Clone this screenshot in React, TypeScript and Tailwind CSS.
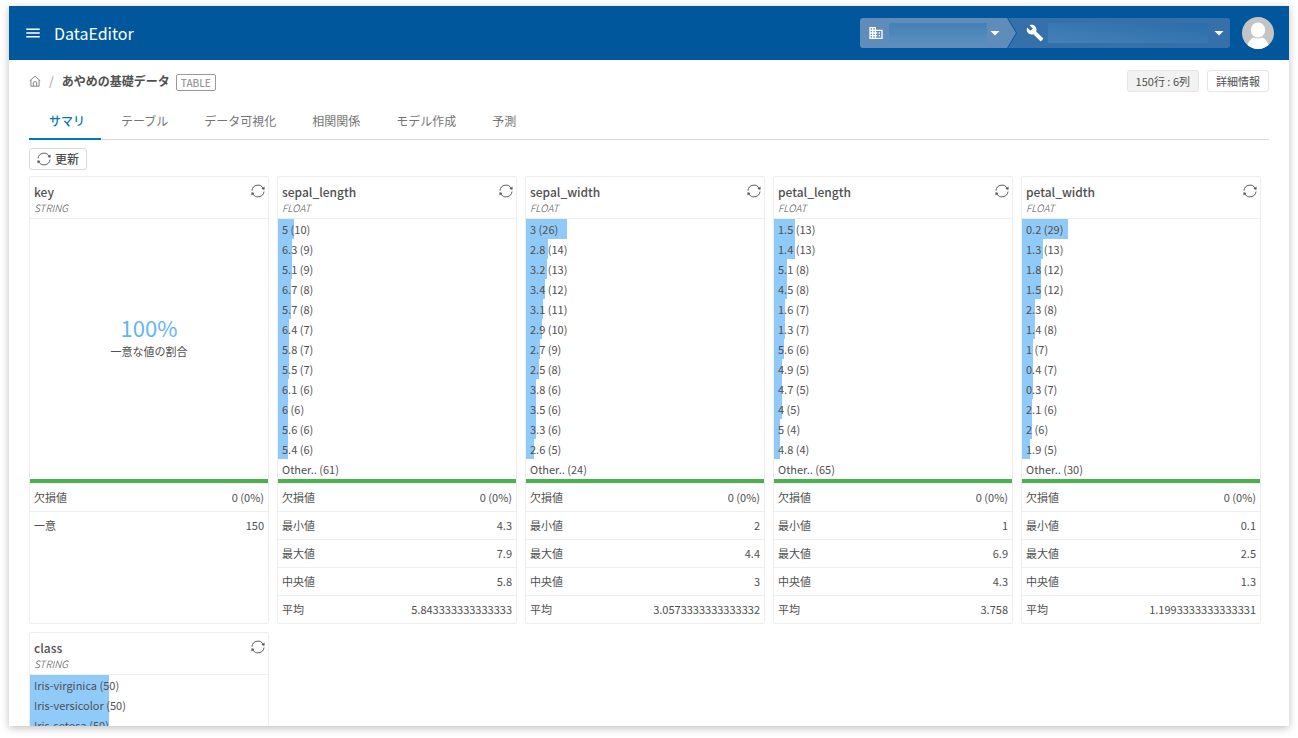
import React, { useState } from 'react';
import { MdBuild, MdBusiness, MdMenu } from 'react-icons/md';

interface Column {
  name: string;
  type: 'STRING' | 'FLOAT';
  values?: [string, number][];
  uniqueRate?: string;
  stats: [string, string][];
}

const ROW_COUNT = 150;

const columns: Column[] = [
  {
    name: 'key',
    type: 'STRING',
    uniqueRate: '100%',
    stats: [['欠損値', '0 (0%)'], ['一意', '150']],
  },
  {
    name: 'sepal_length',
    type: 'FLOAT',
    values: [
      ['5', 10], ['6.3', 9], ['5.1', 9], ['6.7', 8], ['5.7', 8], ['6.4', 7], ['5.8', 7],
      ['5.5', 7], ['6.1', 6], ['6', 6], ['5.6', 6], ['5.4', 6], ['Other..', 61],
    ],
    stats: [['欠損値', '0 (0%)'], ['最小値', '4.3'], ['最大値', '7.9'], ['中央値', '5.8'], ['平均', '5.843333333333333']],
  },
  {
    name: 'sepal_width',
    type: 'FLOAT',
    values: [
      ['3', 26], ['2.8', 14], ['3.2', 13], ['3.4', 12], ['3.1', 11], ['2.9', 10], ['2.7', 9],
      ['2.5', 8], ['3.8', 6], ['3.5', 6], ['3.3', 6], ['2.6', 5], ['Other..', 24],
    ],
    stats: [['欠損値', '0 (0%)'], ['最小値', '2'], ['最大値', '4.4'], ['中央値', '3'], ['平均', '3.0573333333333332']],
  },
  {
    name: 'petal_length',
    type: 'FLOAT',
    values: [
      ['1.5', 13], ['1.4', 13], ['5.1', 8], ['4.5', 8], ['1.6', 7], ['1.3', 7], ['5.6', 6],
      ['4.9', 5], ['4.7', 5], ['4', 5], ['5', 4], ['4.8', 4], ['Other..', 65],
    ],
    stats: [['欠損値', '0 (0%)'], ['最小値', '1'], ['最大値', '6.9'], ['中央値', '4.3'], ['平均', '3.758']],
  },
  {
    name: 'petal_width',
    type: 'FLOAT',
    values: [
      ['0.2', 29], ['1.3', 13], ['1.8', 12], ['1.5', 12], ['2.3', 8], ['1.4', 8], ['1', 7],
      ['0.4', 7], ['0.3', 7], ['2.1', 6], ['2', 6], ['1.9', 5], ['Other..', 30],
    ],
    stats: [['欠損値', '0 (0%)'], ['最小値', '0.1'], ['最大値', '2.5'], ['中央値', '1.3'], ['平均', '1.1993333333333331']],
  },
  {
    name: 'class',
    type: 'STRING',
    values: [['Iris-virginica', 50], ['Iris-versicolor', 50], ['Iris-setosa', 50]],
    stats: [],
  },
];

const tabs = ['サマリ', 'テーブル', 'データ可視化', '相関関係', 'モデル作成', '予測'];

const HomeIcon = () => (
  <svg viewBox="0 0 12 12" className="w-3 h-3" fill="none" stroke="#666" strokeWidth="0.8" strokeLinejoin="round">
    <path d="M0.8 5.8 6 1.2l5.2 4.6" />
    <path d="M1.9 5v6.2h8.2V5" />
    <path d="M4.3 11V7.6c0-.5.3-.8.8-.8h1.8c.5 0 .8.3.8.8V11" />
  </svg>
);

const SyncIcon = () => (
  <svg viewBox="0 0 14 14" className="w-[14px] h-[14px]" fill="none" stroke="currentColor" strokeWidth="0.9">
    <path d="M1 6.5A6 6 0 0 1 12.4 4.600" />
    <path d="M13 7.5A6 6 0 0 1 1.600 9.400" />
    <path d="M13.500 2.600v3.200l-3-.8z" fill="currentColor" stroke="none" />
    <path d="M.5 11.400V8.200l3 .8z" fill="currentColor" stroke="none" />
  </svg>
);

const Caret = () => (
  <svg viewBox="0 0 10 5" className="w-[10px] h-[5px] shrink-0" fill="currentColor">
    <path d="M.5 0h9L5 4.5z" />
  </svg>
);

const Avatar = () => (
  <svg viewBox="0 0 32 32" className="w-8 h-8 rounded-full">
    <rect width="32" height="32" fill="#c4c4c4" />
    <ellipse cx="16" cy="13" rx="7.2" ry="7.6" fill="#fff" />
    <path d="M4.500 32c.6-5 3-9.500 7-11.500 2.500 1.300 6.500 1.300 9 0 4 2 6.400 6.500 7 11.500z" fill="#fff" />
  </svg>
);

const Header = () => (
  <header className="flex shrink-0 items-center h-[54px] px-[15px] bg-[#00579b] text-white">
    <button aria-label="メニュー">
      <MdMenu className="w-[18px] h-[18px]" />
    </button>
    <h1 className="ml-3 text-base leading-6">DataEditor</h1>
    <div className="flex items-center ml-auto gap-3">
      <div className="flex h-[30px] rounded-[3px] overflow-hidden bg-[#3670aa]">
        <div className="pr-px bg-[#00579b] [clip-path:polygon(0_0,calc(100%-9px)_0,100%_50%,calc(100%-9px)_100%,0_100%)]">
          <label className="flex items-center h-full w-[156px] pl-2 pr-4 bg-[#5f8cbb] [clip-path:polygon(0_0,calc(100%-9px)_0,100%_50%,calc(100%-9px)_100%,0_100%)]">
            <MdBusiness className="w-4 h-4 shrink-0" />
            <select
              aria-label="組織"
              className="appearance-none flex-1 min-w-0 h-5 ml-[5px] mr-[3px] bg-linear-to-t from-[#5c8dbf] to-[#4181b6]"
            >
              <option value=""></option>
            </select>
            <Caret />
          </label>
        </div>
        <label className="flex items-center w-[213px] pl-[9px] pr-[6px]">
          <MdBuild className="w-[18px] h-[18px] shrink-0" />
          <select
            aria-label="プロジェクト"
            className="appearance-none flex-1 min-w-0 h-5 ml-1 mr-[6px] bg-linear-to-tr from-[#4481b6] to-[#2a6dab]"
          >
            <option value=""></option>
          </select>
          <Caret />
        </label>
      </div>
      <button aria-label="アカウント">
        <Avatar />
      </button>
    </div>
  </header>
);

const ColumnCard: React.FC<{ column: Column }> = ({ column }) => (
  <section className="flex flex-col w-60 min-h-[448px] border border-[#eee] rounded-xs text-[11px]">
    <div className="flex items-start justify-between h-[42px] px-1 pt-[7px] border-b border-[#eee]">
      <div>
        <h2 className="text-xs leading-4 font-medium">{column.name}</h2>
        <p className="text-[10px] leading-4 italic font-light">{column.type}</p>
      </div>
      <button aria-label={`${column.name}を更新`} className="-mr-px">
        <SyncIcon />
      </button>
    </div>
    {column.values ? (
      <ul className="h-[260px]">
        {column.values.map(([value, count]) => (
          <li key={value} className="relative h-5 pl-1 leading-5 whitespace-nowrap">
            {value !== 'Other..' && (
              <div
                className="absolute inset-y-0 left-0 bg-[#90caf9]"
                style={{ width: `${(count / ROW_COUNT) * 100}%` }}
              />
            )}
            <span className="relative">{value} ({count})</span>
          </li>
        ))}
      </ul>
    ) : (
      <div className="flex flex-col items-center justify-center h-[260px] pb-6">
        <p className="text-[22px] leading-7 text-[#64b5f6]">{column.uniqueRate}</p>
        <p className="leading-5">一意な値の割合</p>
      </div>
    )}
    <div className="h-1 bg-[#4caf50]" />
    <table className="w-full border-separate border-spacing-0">
      <tbody>
        {column.stats.map(([label, value]) => (
          <tr key={label}>
            <th scope="row" className="h-7 p-0 pl-1 border-t border-[#eee] text-left font-normal">{label}</th>
            <td className="h-7 p-0 pr-1 border-t border-[#eee] text-right">{value}</td>
          </tr>
        ))}
      </tbody>
    </table>
  </section>
);

export default function App() {
  const [activeTab, setActiveTab] = useState('サマリ');

  return (
    <div className="h-screen px-[9px] pt-[6px] pb-3 bg-white text-[#505050] font-['Noto_Sans_CJK_JP',sans-serif]">
      <div className="flex flex-col h-full overflow-hidden bg-white shadow-[0_2px_8px_rgba(0,0,0,0.25)]">
        <Header />
        <main className="flex-1 min-h-0 px-5 overflow-hidden">
          <div className="flex items-center justify-between pt-[10px]">
            <nav className="flex items-center text-xs">
              <a href="#" aria-label="ホーム">
                <HomeIcon />
              </a>
              <span className="mx-2 text-[#999]">/</span>
              <span className="font-bold">あやめの基礎データ</span>
              <span className="mt-[3px] ml-[6px] px-1 border border-[#999] rounded-xs text-[10px] leading-[15px] font-medium text-[#999]">
                TABLE
              </span>
            </nav>
            <div className="flex gap-2 text-[11px]">
              <span className="h-[22px] px-2 border border-[#e5e5e5] rounded-[3px] bg-[#f2f2f2] leading-5">150行 : 6列</span>
              <button className="h-[22px] px-2 border border-[#e5e5e5] rounded-[3px] leading-5">詳細情報</button>
            </div>
          </div>

          <div role="tablist" className="flex h-12 border-b border-[#d9d9d9] text-xs">
            {tabs.map((tab) => (
              <button
                key={tab}
                role="tab"
                aria-selected={tab === activeTab}
                onClick={() => setActiveTab(tab)}
                className={`h-12 pl-5 pr-4 pt-[11px] border-b-2 ${
                  tab === activeTab ? 'border-[#0277bd] text-[#0277bd] font-medium' : 'border-transparent text-[#757575]'
                }`}
              >
                {tab}
              </button>
            ))}
          </div>

          <button className="flex items-center h-[22px] mt-2 px-[7px] gap-1 border border-[#d9d9d9] rounded-[3px] text-xs font-medium">
            <SyncIcon />
            更新
          </button>

          <div className="flex flex-wrap gap-2 mt-[6px]">
            {columns.map((column) => (
              <ColumnCard key={column.name} column={column} />
            ))}
          </div>
        </main>
      </div>
    </div>
  );
}
